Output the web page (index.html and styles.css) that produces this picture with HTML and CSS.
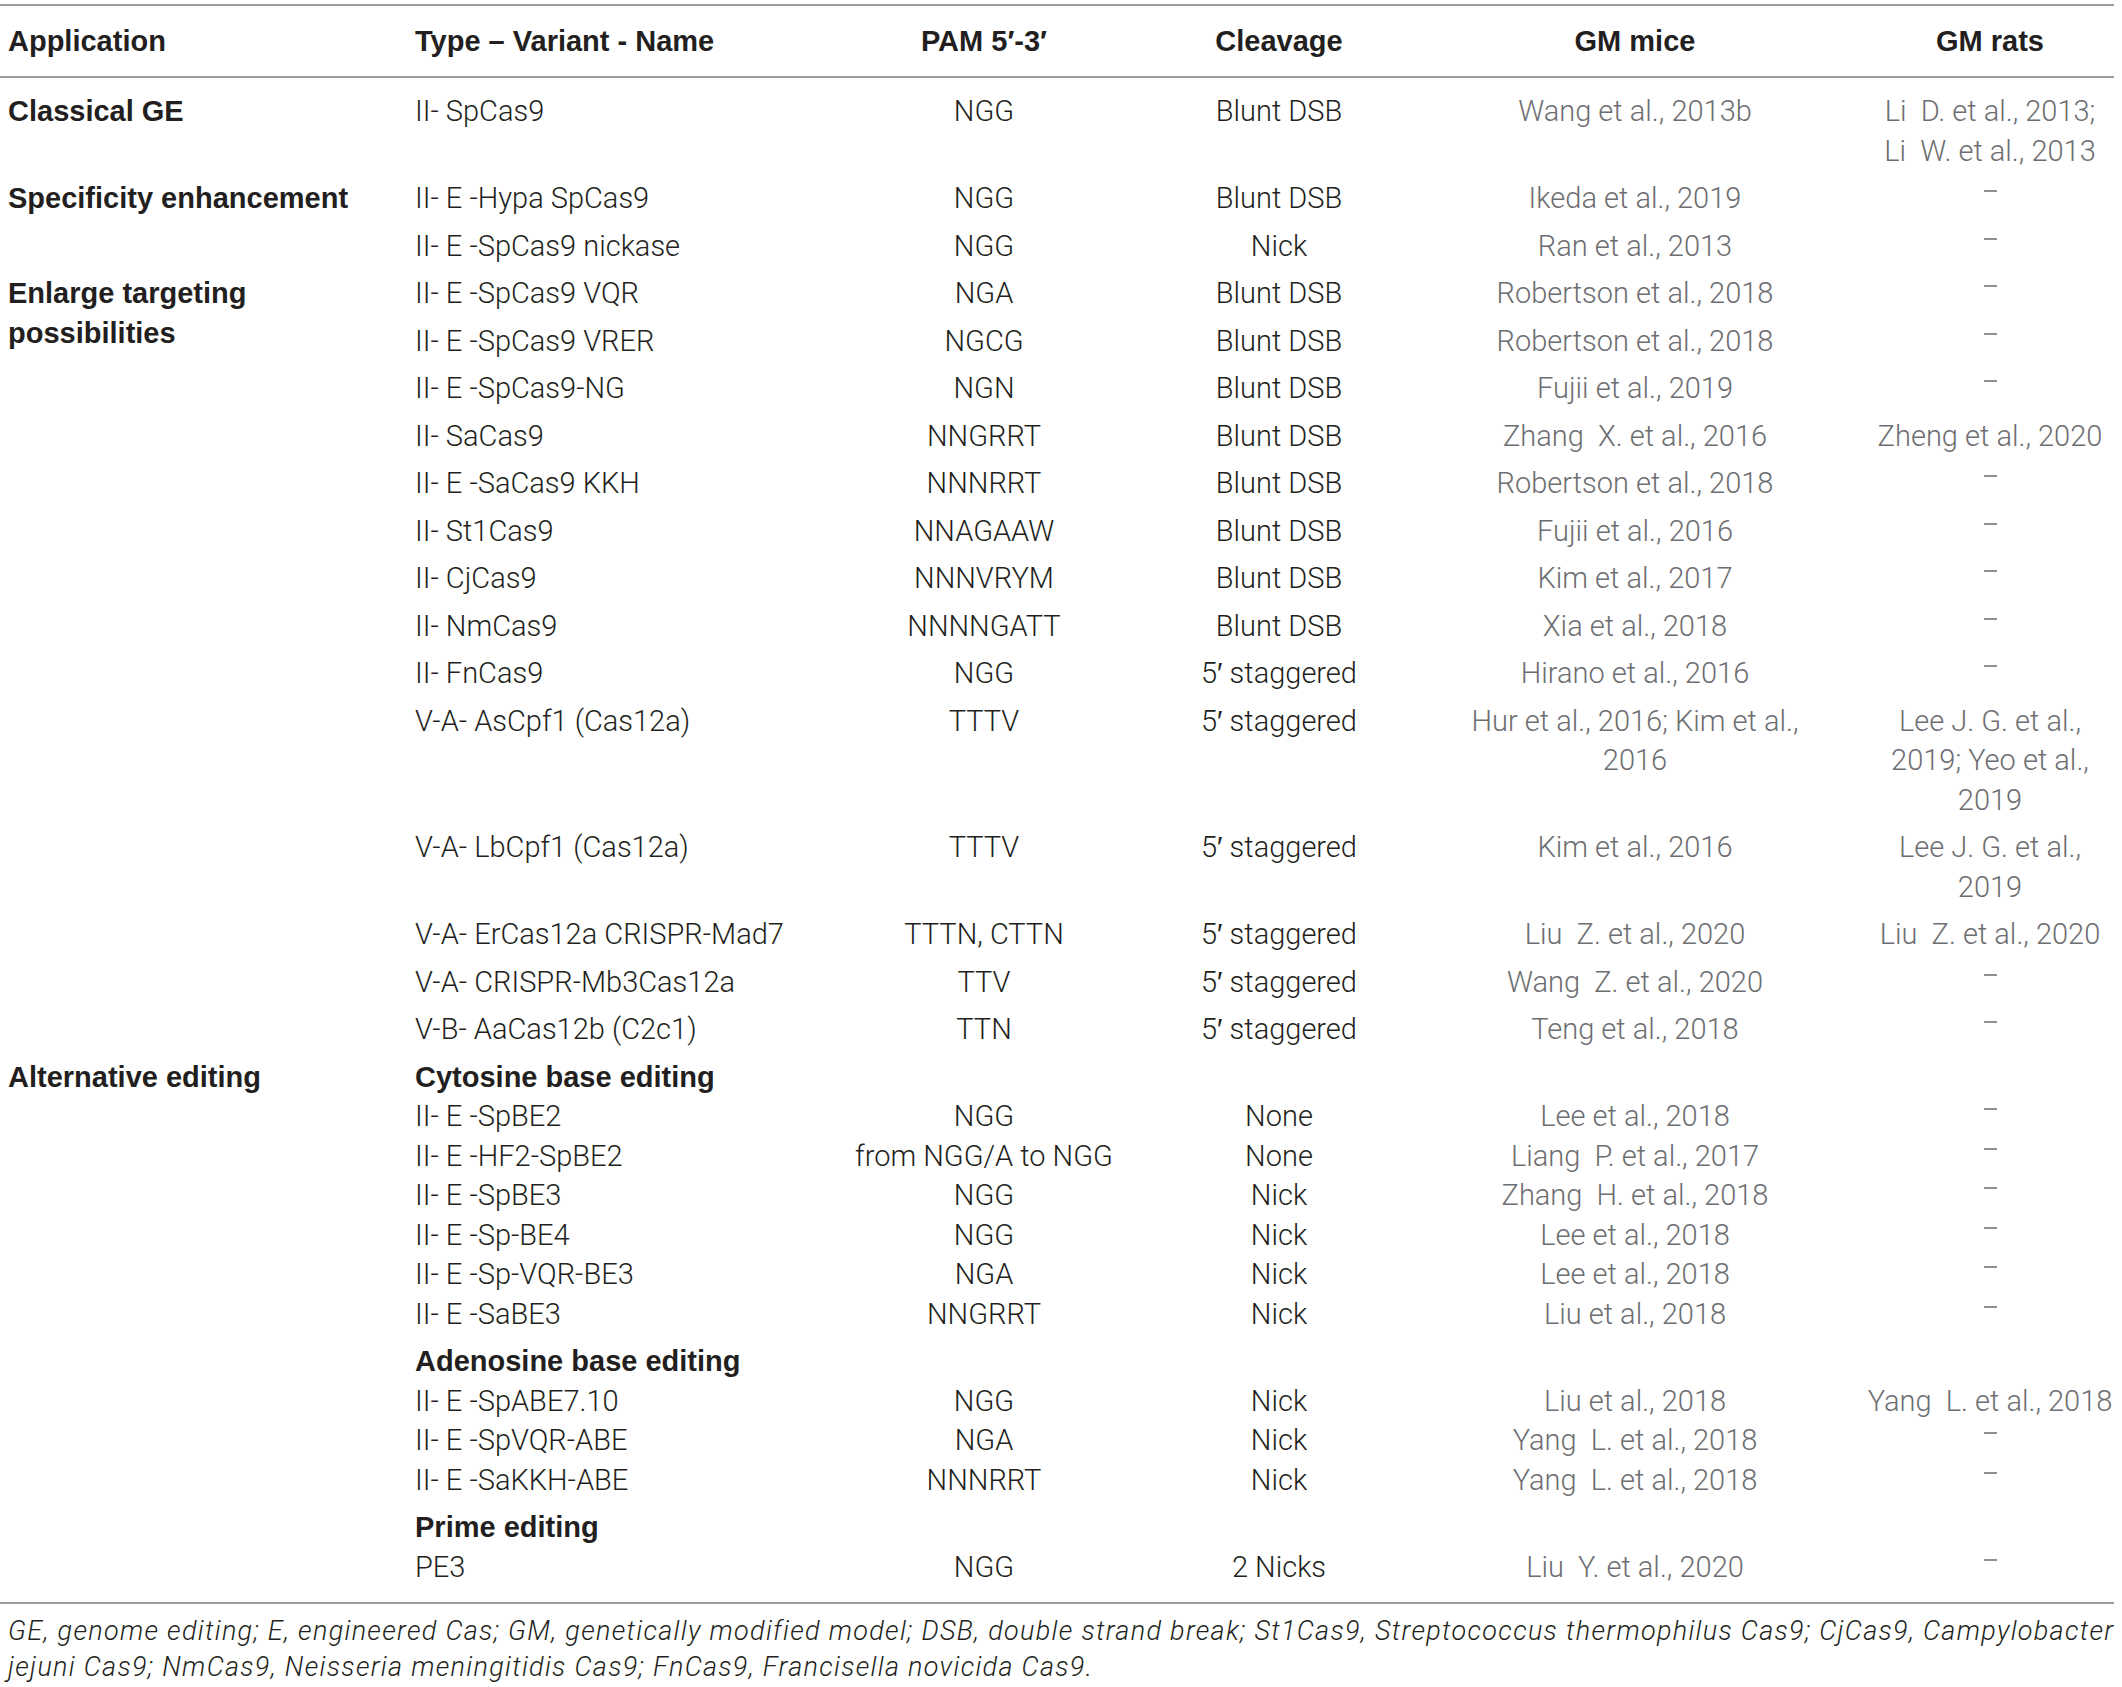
FILE: index.html
```html
<!DOCTYPE html>
<html lang="en">
<head>
<meta charset="utf-8">
<title>CRISPR tools table</title>
<link rel="stylesheet" href="styles.css">
</head>
<body>
<div class="page">
<table class="tbl">
  <colgroup>
    <col class="c1"><col class="c2"><col class="c3"><col class="c4"><col class="c5"><col class="c6">
  </colgroup>
  <thead>
    <tr>
      <th class="l">Application</th>
      <th class="l">Type – Variant - Name</th>
      <th>PAM 5′-3′</th>
      <th>Cleavage</th>
      <th>GM mice</th>
      <th>GM rats</th>
    </tr>
  </thead>
  <tbody>
    <tr class="first">
      <td class="app">Classical GE</td>
      <td class="l">II- SpCas9</td><td>NGG</td><td>Blunt DSB</td>
      <td class="ref">Wang et al., 2013b</td>
      <td class="ref">Li&nbsp; D. et al., 2013;<br>Li&nbsp; W. et al., 2013</td>
    </tr>
    <tr>
      <td class="app" rowspan="2">Specificity enhancement</td>
      <td class="l">II- E -Hypa SpCas9</td><td>NGG</td><td>Blunt DSB</td>
      <td class="ref">Ikeda et al., 2019</td><td class="ref"><span class="dash"></span></td>
    </tr>
    <tr>
      <td class="l">II- E -SpCas9 nickase</td><td>NGG</td><td>Nick</td>
      <td class="ref">Ran et al., 2013</td><td class="ref"><span class="dash"></span></td>
    </tr>
    <tr>
      <td class="app" rowspan="14">Enlarge targeting<br>possibilities</td>
      <td class="l">II- E -SpCas9 VQR</td><td>NGA</td><td>Blunt DSB</td>
      <td class="ref">Robertson et al., 2018</td><td class="ref"><span class="dash"></span></td>
    </tr>
    <tr>
      <td class="l">II- E -SpCas9 VRER</td><td>NGCG</td><td>Blunt DSB</td>
      <td class="ref">Robertson et al., 2018</td><td class="ref"><span class="dash"></span></td>
    </tr>
    <tr>
      <td class="l">II- E -SpCas9-NG</td><td>NGN</td><td>Blunt DSB</td>
      <td class="ref">Fujii et al., 2019</td><td class="ref"><span class="dash"></span></td>
    </tr>
    <tr>
      <td class="l">II- SaCas9</td><td>NNGRRT</td><td>Blunt DSB</td>
      <td class="ref">Zhang&nbsp; X. et al., 2016</td><td class="ref">Zheng et al., 2020</td>
    </tr>
    <tr>
      <td class="l">II- E -SaCas9 KKH</td><td>NNNRRT</td><td>Blunt DSB</td>
      <td class="ref">Robertson et al., 2018</td><td class="ref"><span class="dash"></span></td>
    </tr>
    <tr>
      <td class="l">II- St1Cas9</td><td>NNAGAAW</td><td>Blunt DSB</td>
      <td class="ref">Fujii et al., 2016</td><td class="ref"><span class="dash"></span></td>
    </tr>
    <tr>
      <td class="l">II- CjCas9</td><td>NNNVRYM</td><td>Blunt DSB</td>
      <td class="ref">Kim et al., 2017</td><td class="ref"><span class="dash"></span></td>
    </tr>
    <tr>
      <td class="l">II- NmCas9</td><td>NNNNGATT</td><td>Blunt DSB</td>
      <td class="ref">Xia et al., 2018</td><td class="ref"><span class="dash"></span></td>
    </tr>
    <tr>
      <td class="l">II- FnCas9</td><td>NGG</td><td>5<span class="pr">′</span> staggered</td>
      <td class="ref">Hirano et al., 2016</td><td class="ref"><span class="dash"></span></td>
    </tr>
    <tr>
      <td class="l">V-A- AsCpf1 (Cas12a)</td><td>TTTV</td><td>5<span class="pr">′</span> staggered</td>
      <td class="ref">Hur et al., 2016; Kim et al.,<br>2016</td>
      <td class="ref">Lee J. G. et al.,<br>2019; Yeo et al.,<br>2019</td>
    </tr>
    <tr>
      <td class="l">V-A- LbCpf1 (Cas12a)</td><td>TTTV</td><td>5<span class="pr">′</span> staggered</td>
      <td class="ref">Kim et al., 2016</td>
      <td class="ref">Lee J. G. et al.,<br>2019</td>
    </tr>
    <tr>
      <td class="l">V-A- ErCas12a CRISPR-Mad7</td><td>TTTN, CTTN</td><td>5<span class="pr">′</span> staggered</td>
      <td class="ref">Liu&nbsp; Z. et al., 2020</td><td class="ref">Liu&nbsp; Z. et al., 2020</td>
    </tr>
    <tr>
      <td class="l">V-A- CRISPR-Mb3Cas12a</td><td>TTV</td><td>5<span class="pr">′</span> staggered</td>
      <td class="ref">Wang&nbsp; Z. et al., 2020</td><td class="ref"><span class="dash"></span></td>
    </tr>
    <tr>
      <td class="l">V-B- AaCas12b (C2c1)</td><td>TTN</td><td>5<span class="pr">′</span> staggered</td>
      <td class="ref">Teng et al., 2018</td><td class="ref"><span class="dash"></span></td>
    </tr>

    <tr class="s">
      <td class="app" rowspan="13">Alternative editing</td>
      <td class="l sub">Cytosine base editing</td><td></td><td></td><td></td><td></td>
    </tr>
    <tr class="m">
      <td class="l">II- E -SpBE2</td><td>NGG</td><td>None</td>
      <td class="ref">Lee et al., 2018</td><td class="ref"><span class="dash"></span></td>
    </tr>
    <tr class="m">
      <td class="l">II- E -HF2-SpBE2</td><td>from NGG/A to NGG</td><td>None</td>
      <td class="ref">Liang&nbsp; P. et al., 2017</td><td class="ref"><span class="dash"></span></td>
    </tr>
    <tr class="m">
      <td class="l">II- E -SpBE3</td><td>NGG</td><td>Nick</td>
      <td class="ref">Zhang&nbsp; H. et al., 2018</td><td class="ref"><span class="dash"></span></td>
    </tr>
    <tr class="m">
      <td class="l">II- E -Sp-BE4</td><td>NGG</td><td>Nick</td>
      <td class="ref">Lee et al., 2018</td><td class="ref"><span class="dash"></span></td>
    </tr>
    <tr class="m">
      <td class="l">II- E -Sp-VQR-BE3</td><td>NGA</td><td>Nick</td>
      <td class="ref">Lee et al., 2018</td><td class="ref"><span class="dash"></span></td>
    </tr>
    <tr class="e">
      <td class="l">II- E -SaBE3</td><td>NNGRRT</td><td>Nick</td>
      <td class="ref">Liu et al., 2018</td><td class="ref"><span class="dash"></span></td>
    </tr>
    <tr class="s">
      <td class="l sub">Adenosine base editing</td><td></td><td></td><td></td><td></td>
    </tr>
    <tr class="m">
      <td class="l">II- E -SpABE7.10</td><td>NGG</td><td>Nick</td>
      <td class="ref">Liu et al., 2018</td><td class="ref">Yang&nbsp; L. et al., 2018</td>
    </tr>
    <tr class="m">
      <td class="l">II- E -SpVQR-ABE</td><td>NGA</td><td>Nick</td>
      <td class="ref">Yang&nbsp; L. et al., 2018</td><td class="ref"><span class="dash"></span></td>
    </tr>
    <tr class="e">
      <td class="l">II- E -SaKKH-ABE</td><td>NNNRRT</td><td>Nick</td>
      <td class="ref">Yang&nbsp; L. et al., 2018</td><td class="ref"><span class="dash"></span></td>
    </tr>
    <tr class="s">
      <td class="l sub">Prime editing</td><td></td><td></td><td></td><td></td>
    </tr>
    <tr class="e last">
      <td class="l">PE3</td><td>NGG</td><td>2 Nicks</td>
      <td class="ref">Liu&nbsp; Y. et al., 2020</td><td class="ref"><span class="dash"></span></td>
    </tr>
  </tbody>
</table>
<div class="note">
  <div class="note-line">GE, genome editing; E, engineered Cas; GM, genetically modified model; DSB, double strand break; St1Cas9, Streptococcus thermophilus Cas9; CjCas9, Campylobacter</div>
  <div class="note-line">jejuni Cas9; NmCas9, Neisseria meningitidis Cas9; FnCas9, Francisella novicida Cas9.</div>
</div>
</div>
</body>
</html>
```
FILE: styles.css
```css
html, body {
  margin: 0;
  padding: 0;
  background: #ffffff;
}

.page {
  padding-top: 4px;
  width: 2114px;
  font-family: Roboto, "Liberation Sans", sans-serif;
  font-weight: 300;
  font-size: 29px;
  line-height: 39.5px;
  color: #231f20;
}

.tbl {
  width: 2114px;
  table-layout: fixed;
  border-collapse: collapse;
  border-spacing: 0;
  border-top: 2px solid #9d9d9d;
  border-bottom: 2px solid #9d9d9d;
}

.c1 { width: 407px; }
.c2 { width: 407px; }
.c3 { width: 340px; }
.c4 { width: 250px; }
.c5 { width: 462px; }
.c6 { width: 248px; }

.tbl th {
  font-family: "Liberation Sans", Arial, sans-serif;
  font-weight: 700;
  text-align: center;
  padding: 15.5px 0 15px;
  white-space: nowrap;
  border-bottom: 2px solid #9d9d9d;
}

.tbl th.l {
  text-align: left;
  padding-left: 8px;
}

.tbl td {
  text-align: center;
  vertical-align: top;
  padding: 4px 0;
  white-space: nowrap;
}

.tbl td.l {
  text-align: left;
  padding-left: 8px;
}

.tbl td.app {
  text-align: left;
  padding-left: 8px;
  font-family: "Liberation Sans", Arial, sans-serif;
  font-weight: 700;
}

.tbl td.sub {
  font-family: "Liberation Sans", Arial, sans-serif;
  font-weight: 700;
}

.tbl td.ref {
  color: #6d6e71;
}

.pr {
  font-family: "Liberation Sans", sans-serif;
  font-weight: 400;
}

.tbl tr.first td {
  padding-top: 14px;
}

.tbl tr.s td { padding-bottom: 0; }
.tbl tr.m td { padding-top: 0; padding-bottom: 0; }
.tbl tr.e td { padding-top: 0; }
.tbl tr.last td { padding-bottom: 15px; }

.dash {
  display: inline-block;
  width: 13px;
  height: 2px;
  background: #8f8f8f;
  vertical-align: 16px;
}

.note {
  padding: 9px 0 0 8px;
  font-style: italic;
  font-size: 27px;
  letter-spacing: 1.3px;
  line-height: 36px;
  color: #231f20;
}

.note-line {
  white-space: nowrap;
}
```
